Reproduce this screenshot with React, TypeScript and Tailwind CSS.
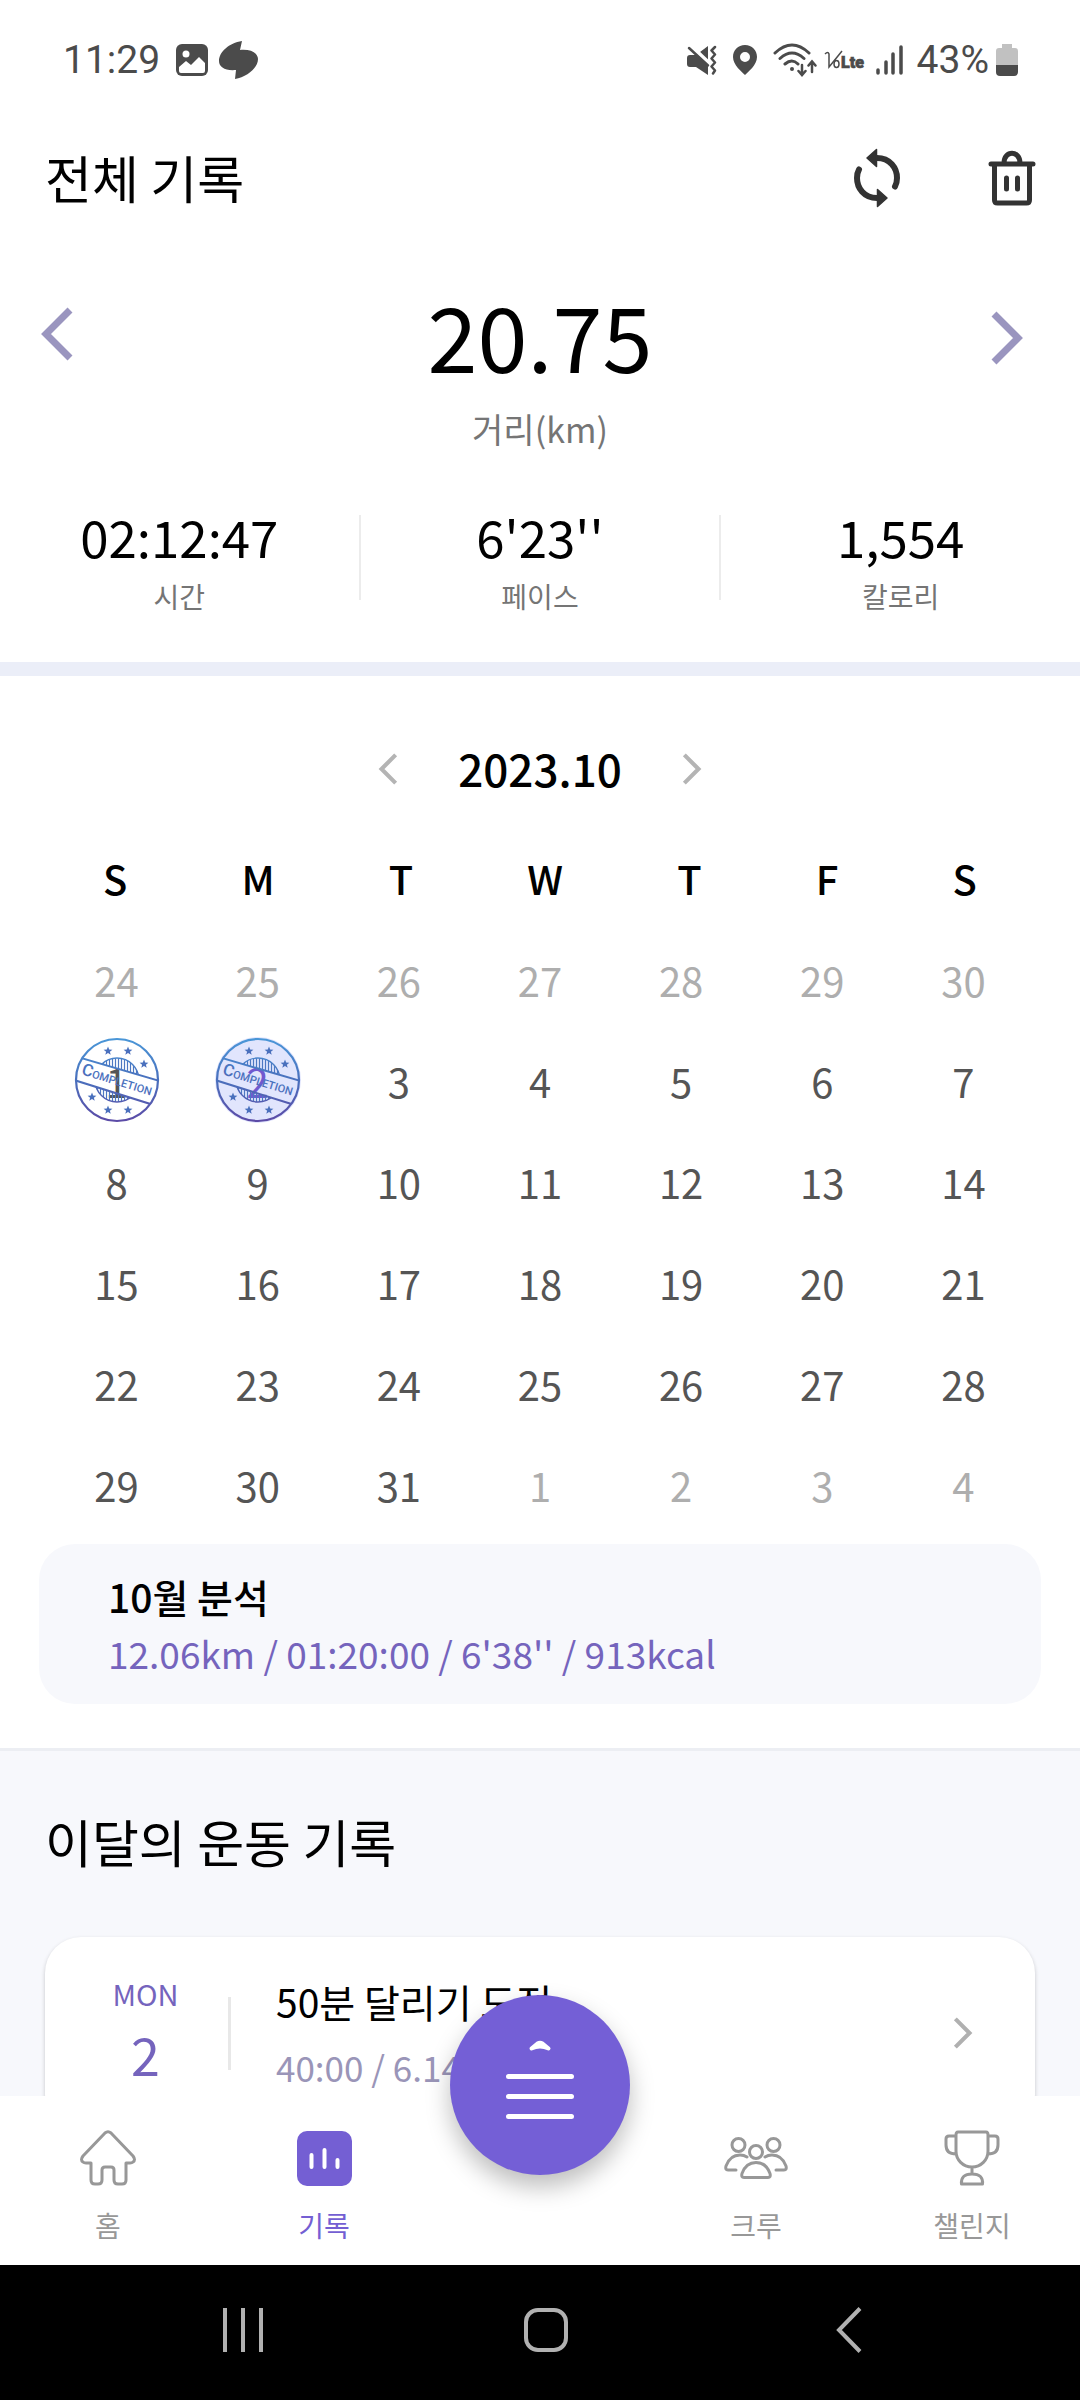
import React from "react";

const inMonth = "text-[#555555]";
const outMonth = "text-[#aeaeae]";

const DAYS: number[][] = [
  [24, 25, 26, 27, 28, 29, 30],
  [1, 2, 3, 4, 5, 6, 7],
  [8, 9, 10, 11, 12, 13, 14],
  [15, 16, 17, 18, 19, 20, 21],
  [22, 23, 24, 25, 26, 27, 28],
  [29, 30, 31, 1, 2, 3, 4],
];

function Chevron({ dir, className, stroke }: { dir: "left" | "right"; className: string; stroke: number }) {
  return (
    <svg viewBox="0 0 34 56" className={className} fill="none" stroke="currentColor" strokeWidth={stroke} aria-hidden="true">
      <path d={dir === "left" ? "M30 4 L6 28 L30 52" : "M4 4 L28 28 L4 52"} />
    </svg>
  );
}

function StatusBar() {
  return (
    <header className="flex h-30 shrink-0 items-center justify-between pr-[62px] pl-[63px] font-['Roboto',sans-serif] text-[39px] leading-none text-[#4b4b4b]">
      <div className="flex items-center">
        <span className="w-[98px]">11:29</span>
        <svg viewBox="0 0 32 32" className="ml-[15px] size-8" aria-hidden="true">
          <rect width="32" height="32" rx="6" fill="currentColor" />
          <circle cx="10" cy="10" r="3.500" fill="#fff" />
          <path d="M3 23l7-6 5 4 8-8 6 6v8q0 2-2 2H5q-2 0-2-2z" fill="#fff" />
        </svg>
        <svg viewBox="0 0 39 38" className="ml-[11px] h-[38px] w-[39px]" fill="currentColor" aria-hidden="true">
          <path d="M23 0C10 2 0 11 0 20c0 6 6 10 17 9l-1 9c12-2 23-11 23-20 0-6-7-10-18-9z" />
        </svg>
      </div>
      <div className="flex items-center">
        <svg viewBox="0 0 30 30" className="h-[30px] w-[30px]" aria-hidden="true">
          <path d="M3 10h6L21 1v29L9 22H3q-3 0-3-3v-6q0-3 3-3z" fill="currentColor" />
          <path d="M4 1l20 19" stroke="#fff" strokeWidth="4" />
          <path d="M2 3l19 17.500" fill="none" stroke="currentColor" strokeWidth="2.500" strokeLinecap="round" />
          <path d="M28 2l-3.500 3.500 3.500 4-3.500 4 3.500 4-3.500 4 3.500 4-2 3" fill="none" stroke="currentColor" strokeWidth="2.500" strokeLinecap="round" strokeLinejoin="round" />
        </svg>
        <svg viewBox="0 0 24 30" className="ml-4 h-[30px] w-6" aria-hidden="true">
          <path fillRule="evenodd" fill="currentColor" d="M12 0C5 0 0 5 0 12c0 8 9 15 12 18 3-3 12-10 12-18C24 5 19 0 12 0zm0 7a5 5 0 100 10 5 5 0 000-10z" />
        </svg>
        <svg viewBox="0 0 44 34" className="ml-4 h-[34px] w-11" fill="none" stroke="currentColor" strokeLinecap="round" aria-hidden="true">
          <path d="M2 10Q19-6 36 10M7 15.500q12-11 24 0M12 21q7-6 13 0" strokeWidth="3" />
          <circle cx="19" cy="26" r="2" fill="currentColor" stroke="none" />
          <path d="M29 22v9M25.500 28l3.500 4 3.500-4M39 29v-9M35.500 22.500l3.500-4 3.500 4" strokeWidth="2.500" />
        </svg>
        <svg viewBox="0 0 41 22" className="ml-[7px] h-[22px] w-[41px]" fill="currentColor" aria-hidden="true">
          <path d="M1 5q3-3 4 0v13Q10 12 18 2" fill="none" stroke="currentColor" strokeWidth="1.500" />
          <ellipse cx="12.500" cy="15" rx="2.500" ry="3.500" fill="none" stroke="currentColor" strokeWidth="1.500" />
          <text x="17" y="19" fontSize="16" fontWeight="900" fontFamily="Roboto" stroke="currentColor" strokeWidth="0.700">Lte</text>
        </svg>
        <svg viewBox="0 0 27 30" className="ml-[11px] h-[30px] w-[27px]" fill="none" stroke="currentColor" strokeWidth="3.500" strokeLinecap="round" aria-hidden="true">
          <path d="M2 25v3M10 17v11M17 9v19M25 2v26" />
        </svg>
        <span className="ml-[14px]">43%</span>
        <svg viewBox="0 0 22 32" className="ml-[7px] h-8 w-[22px]" aria-hidden="true">
          <path d="M6 0h10v4h3q3 0 3 3v14H0V7q0-3 3-3h3z" fill="#c1c1c1" />
          <path d="M0 21h22v7q0 4-4 4H4q-4 0-4-4z" fill="currentColor" />
        </svg>
      </div>
    </header>
  );
}

const STAR = "M0-4.500 1.200-1.400 4.400-1.300 1.900.700 2.700 3.800 0 2 -2.700 3.800 -1.900.700 -4.400-1.300 -1.200-1.400z";

function Stamp({ id }: { id: string }) {
  const ink = `url(#ink-${id})`;
  return (
    <svg viewBox="-43 -43 86 86" className="absolute inset-0 size-full" aria-hidden="true">
      <defs>
        <linearGradient id={`ink-${id}`} gradientUnits="userSpaceOnUse" x1="0" y1="-42" x2="0" y2="42">
          <stop offset="0" stopColor="#4a97d8" />
          <stop offset="0.5" stopColor="#4a70bd" />
          <stop offset="1" stopColor="#5c4aa6" />
        </linearGradient>
        <pattern id={`hatch-${id}`} patternUnits="userSpaceOnUse" width="3" height="4">
          <path d="M1.500 0v4" stroke="#4d78c2" strokeWidth="1.200" />
        </pattern>
        <clipPath id={`top-${id}`}>
          <path d="M-43-43H43V1L-43-24z" />
        </clipPath>
        <clipPath id={`bottom-${id}`}>
          <path d="M-43 43H43V27L-43 0z" />
        </clipPath>
        <clipPath id={`disc-${id}`}>
          <circle r="41" />
        </clipPath>
      </defs>
      <circle r="41" fill="none" stroke={ink} strokeWidth="2.200" />
      <g clipPath={`url(#top-${id})`} stroke={ink} strokeWidth="1.400">
        <circle r="22" fill={`url(#hatch-${id})`} />
      </g>
      <g clipPath={`url(#bottom-${id})`} stroke={ink} strokeWidth="1.400">
        <circle r="22" fill={`url(#hatch-${id})`} />
      </g>
      <g clipPath={`url(#disc-${id})`} stroke={ink} strokeWidth="2" fill="none">
        <path d="M-43-24 43 1M-43 0 43 27" />
      </g>
      <g fill={ink}>
        <path d={STAR} transform="translate(-9 -29)" />
        <path d={STAR} transform="translate(11 -29)" />
        <path d={STAR} transform="translate(27 -16)" />
        <path d={STAR} transform="translate(-25 17)" />
        <path d={STAR} transform="translate(-9 30)" />
        <path d={STAR} transform="translate(11 30)" />
        <text transform="rotate(17)" x="0" y="5" textAnchor="middle" fontFamily="Roboto" fontWeight="500" fontSize="11">
          <tspan fontSize="17">C</tspan>OMPLETION
        </text>
      </g>
    </svg>
  );
}

function Stat({ value, label }: { value: string; label: string }) {
  return (
    <div className="flex flex-1 flex-col items-center">
      <dd className="text-[51px] leading-[72px]">{value}</dd>
      <dt className="text-[28px] leading-[48px] text-[#757575]">{label}</dt>
    </div>
  );
}

function Summary() {
  return (
    <section className="pb-[42px]">
      <div className="flex items-start justify-between pt-[42px] pr-14 pl-10">
        <button type="button" aria-label="이전 기록" className="mt-7 mr-4 text-[#9a95bf]">
          <Chevron dir="left" stroke={7} className="h-14 w-[34px]" />
        </button>
        <div className="mt-[6px] flex flex-col items-center">
          <strong className="text-[90px] leading-[100px] font-normal">20.75</strong>
          <span className="mt-5 text-[34px] leading-[50px] text-[#757575]">거리(km)</span>
        </div>
        <button type="button" aria-label="다음 기록" className="mt-8 text-[#9a95bf]">
          <Chevron dir="right" stroke={7} className="h-14 w-[34px]" />
        </button>
      </div>
      <dl className="mt-[46px] flex items-start">
        <Stat value="02:12:47" label="시간" />
        <div className="mt-[15px] h-[85px] w-[2px] bg-[#ececec]" />
        <Stat value="6'23''" label="페이스" />
        <div className="mt-[15px] h-[85px] w-[2px] bg-[#ececec]" />
        <Stat value="1,554" label="칼로리" />
      </dl>
    </section>
  );
}

function DayCell({ day, row }: { day: number; row: number }) {
  const outside = (row === 0 && day > 20) || (row === 5 && day < 20);
  const stamped = row === 1 && day < 3;
  const selected = row === 1 && day === 2;
  return (
    <td className="h-[101px] p-0 text-center">
      <button type="button" className={`relative inline-flex size-[86px] items-center justify-center rounded-full align-middle ${selected ? "bg-[#e1e5fd] text-[#7059cf]" : outside ? outMonth : inMonth}`}>
        <span className="pt-[2px]">{day}</span>
        {stamped && <Stamp id={String(day)} />}
      </button>
    </td>
  );
}

function Calendar() {
  return (
    <section className="border-t-[14px] border-[#ebeef8] px-[46px] pt-[54px]">
      <div className="flex h-[76px] items-center justify-center">
        <button type="button" aria-label="이전 달" className="mt-[2px] text-[#b4b4b4]">
          <Chevron dir="left" stroke={7} className="h-[34px] w-5" />
        </button>
        <h2 className="mx-[60px] text-[44px] leading-[60px] font-medium">2023.10</h2>
        <button type="button" aria-label="다음 달" className="mt-[2px] text-[#b4b4b4]">
          <Chevron dir="right" stroke={7} className="h-[34px] w-5" />
        </button>
      </div>
      <div className="mt-[42px] flex h-[60px] items-center justify-around text-[40px] font-medium">
        {["S", "M", "T", "W", "T", "F", "S"].map((d, i) => (
          <span key={i}>{d}</span>
        ))}
      </div>
      <table className="mt-5 w-full table-fixed border-collapse text-[40px] leading-none">
        <tbody>
          {DAYS.map((week, r) => (
            <tr key={r}>
              {week.map((d) => (
                <DayCell key={d} day={d} row={r} />
              ))}
            </tr>
          ))}
        </tbody>
      </table>
    </section>
  );
}

function NavItem({ label, active, children }: { label: string; active?: boolean; children: React.ReactNode }) {
  return (
    <a href="#" className={`flex flex-1 flex-col items-center pt-[30px] ${active ? "text-[#745fd3]" : "text-[#989898]"}`}>
      <span className="flex h-[64px] items-center justify-center">{children}</span>
      <span className="mt-[15px] text-[28px] leading-[40px]">{label}</span>
    </a>
  );
}

function BottomNav() {
  return (
    <nav className="relative flex h-[169px] shrink-0 bg-white">
      <NavItem label="홈">
        <svg viewBox="0 0 56 56" className="size-14" fill="none" stroke="currentColor" strokeWidth="3" strokeLinejoin="round" aria-hidden="true">
          <path d="M25 3q3-2.500 6 0l22 23q3 4 0 6-1 1-3 1h-4v17q0 4-4 4h-4q-4 0-4-4V40q0-3-3-3h-6q-3 0-3 3v10q0 4-4 4h-3q-4 0-4-4V33H6q-2 0-3-1-3-2 0-6z" />
        </svg>
      </NavItem>
      <NavItem label="기록" active>
        <svg viewBox="0 0 55 55" className="size-[55px]" aria-hidden="true">
          <rect width="55" height="55" rx="10" fill="currentColor" />
          <path d="M14.500 24v12M27.500 19v17M40.500 29v7" stroke="#fff" strokeWidth="4" strokeLinecap="round" />
        </svg>
      </NavItem>
      <div className="flex-1" />
      <NavItem label="크루">
        <svg viewBox="0 0 64 44" className="h-11 w-16" fill="none" stroke="currentColor" strokeWidth="3" strokeLinecap="round" strokeLinejoin="round" aria-hidden="true">
          <circle cx="14.500" cy="9" r="6.500" />
          <circle cx="49.500" cy="9" r="6.500" />
          <circle cx="32" cy="16" r="6.500" />
          <path d="M12 34H4q-3 0-2-4 4-11 14-11 4 0 7 2M52 34h8q3 0 2-4-4-11-14-11-4 0-7 2" />
          <path d="M20 41.500h24q3 0 2-4-4-11-14-11t-14 11q-1 4 2 4z" />
        </svg>
      </NavItem>
      <NavItem label="챌린지">
        <svg viewBox="0 0 56 56" className="size-14" fill="none" stroke="currentColor" strokeWidth="3" strokeLinejoin="round" aria-hidden="true">
          <path d="M14 2h28q2 0 2 3v16c0 9-7 16-16 16S12 30 12 21V5q0-3 2-3zM12 6H5q-3 0-3 3v6q0 9 10 9M44 6h7q3 0 3 3v6q0 9-10 9M28 37v7M17.500 54q-1-10 10.500-10t10.500 10z" />
        </svg>
      </NavItem>
      <button type="button" aria-label="메뉴" className="absolute -top-[101px] left-1/2 size-[180px] -translate-x-1/2 rounded-full bg-[#745fd6] shadow-[0_12px_24px_rgba(0,0,0,0.26)]">
        <svg viewBox="0 0 180 180" className="size-full" fill="none" stroke="#fff" strokeLinecap="round" strokeLinejoin="round" aria-hidden="true">
          <path d="M58.500 81.500h63M58.500 101.500h63M58.500 121.500h63" strokeWidth="5" />
          <path d="M81.500 53.500l6-5q2.500-1.500 5 0l6 5q-8.500-4-17 0z" fill="#fff" strokeWidth="4" />
        </svg>
      </button>
    </nav>
  );
}

function SystemNav() {
  return (
    <div className="grid h-[135px] shrink-0 grid-cols-3 items-center justify-items-center bg-black pr-20 pb-[6px] pl-[92px] text-[#b1b1b1]">
      <button type="button" aria-label="최근 앱">
        <svg viewBox="0 0 42 44" className="h-11 w-[42px]" stroke="currentColor" strokeWidth="4" aria-hidden="true">
          <path d="M3 0v44M21 0v44M39 0v44" />
        </svg>
      </button>
      <button type="button" aria-label="홈 화면">
        <svg viewBox="0 0 44 44" className="size-11" fill="none" stroke="currentColor" strokeWidth="4" aria-hidden="true">
          <rect x="2" y="2" width="40" height="40" rx="12" />
        </svg>
      </button>
      <button type="button" aria-label="뒤로">
        <svg viewBox="0 0 26 46" className="h-[46px] w-[26px]" fill="none" stroke="currentColor" strokeWidth="4" aria-hidden="true">
          <path d="M24 1.500 3 23l21 21.500" />
        </svg>
      </button>
    </div>
  );
}

export default function App() {
  return (
    <div className="flex h-screen flex-col bg-white font-['Noto_Sans_CJK_KR',sans-serif] text-black">
      <StatusBar />
      <main className="min-h-0 flex-1 overflow-y-auto [scrollbar-width:none]">
        <div className="flex h-[116px] items-center justify-between pr-[44px] pl-[45px]">
          <h1 className="pb-[2px] text-[51px] leading-[70px]">전체 기록</h1>
          <div className="flex items-center gap-[88px]">
            <button type="button" aria-label="새로고침" className="text-[#333]">
              <svg viewBox="0 0 46 60" className="h-[60px] w-[46px]" fill="none" stroke="currentColor" strokeWidth="6" strokeLinecap="round" aria-hidden="true">
                <path d="M23 10c13 0 20 10 20 20q0 5-2 8.500M23 50C10 50 3 40 3 30q0-5 2-8.500" />
                <path d="M22.500 1.500v17l-9.500-8.500zM23.500 41.500v17l9.500-8.500z" fill="currentColor" strokeWidth="1.500" strokeLinejoin="round" />
              </svg>
            </button>
            <button type="button" aria-label="삭제" className="text-[#333]">
              <svg viewBox="0 0 48 56" className="h-14 w-12" fill="none" stroke="currentColor" strokeWidth="5" strokeLinecap="round" strokeLinejoin="round" aria-hidden="true">
                <path d="M3 14h42M6.500 14v36q0 3 3 3h29q3 0 3-3V14M16 13c0-13 16-13 16 0" />
                <path d="M18.500 28v11M29.500 28v11" />
              </svg>
            </button>
          </div>
        </div>
        <Summary />
        <Calendar />
        <section className="px-[39px] pt-[10px] pb-11">
          <div className="rounded-[36px] bg-[#f7f8fc] px-[69px] pt-[23px] pb-[23px]">
            <h3 className="text-[39px] leading-[58px] font-medium">10월 분석</h3>
            <p className="text-[37px] leading-[56px] text-[#7564bd]">12.06km / 01:20:00 / 6'38'' / 913kcal</p>
          </div>
        </section>
        <section className="border-t-[3px] border-[#eceef3] bg-[#f7f8fc] px-[45px] pt-[54px] pb-10">
          <h2 className="text-[51px] leading-[72px]">이달의 운동 기록</h2>
          <a href="#" className="mt-[60px] flex h-48 items-center rounded-[36px] bg-white pr-[62px] shadow-[0_2px_4px_rgba(0,0,0,0.2)]">
            <span className="flex w-[183px] flex-col items-center pl-[18px] text-[#7564bd]">
              <span className="text-[29px] leading-[42px]">MON</span>
              <span className="text-[52px] leading-[80px]">2</span>
            </span>
            <span className="h-[73px] w-[3px] bg-[#e8e8e8]" />
            <span className="ml-[45px] flex flex-1 flex-col">
              <span className="text-[39px] leading-[60px]">50분 달리기 도전</span>
              <span className="mt-2 text-[35px] leading-[56px] text-[#9a95b8]">40:00 / 6.14km</span>
            </span>
            <Chevron dir="right" stroke={7} className="h-[34px] w-5 text-[#b0b0b0]" />
          </a>
        </section>
      </main>
      <BottomNav />
      <SystemNav />
    </div>
  );
}
